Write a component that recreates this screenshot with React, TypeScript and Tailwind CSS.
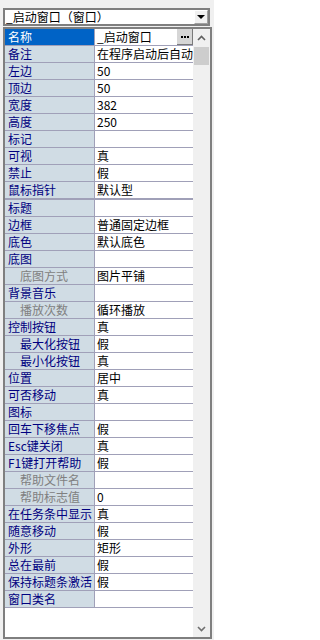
import React from "react"

type Row = {
  name: string
  value?: string
  indent?: boolean
  dim?: boolean
  thick?: boolean
  selected?: boolean
  button?: boolean
}

const rows: Row[] = [
  { name: "名称", value: "_启动窗口", selected: true, button: true },
  { name: "备注", value: "在程序启动后自动" },
  { name: "左边", value: "50" },
  { name: "顶边", value: "50" },
  { name: "宽度", value: "382" },
  { name: "高度", value: "250" },
  { name: "标记" },
  { name: "可视", value: "真" },
  { name: "禁止", value: "假" },
  { name: "鼠标指针", value: "默认型", thick: true },
  { name: "标题" },
  { name: "边框", value: "普通固定边框" },
  { name: "底色", value: "默认底色" },
  { name: "底图" },
  { name: "底图方式", value: "图片平铺", indent: true, dim: true },
  { name: "背景音乐" },
  { name: "播放次数", value: "循环播放", indent: true, dim: true },
  { name: "控制按钮", value: "真" },
  { name: "最大化按钮", value: "假", indent: true },
  { name: "最小化按钮", value: "真", indent: true },
  { name: "位置", value: "居中" },
  { name: "可否移动", value: "真" },
  { name: "图标" },
  { name: "回车下移焦点", value: "假" },
  { name: "Esc键关闭", value: "真" },
  { name: "F1键打开帮助", value: "假" },
  { name: "帮助文件名", indent: true, dim: true },
  { name: "帮助标志值", value: "0", indent: true, dim: true },
  { name: "在任务条中显示", value: "真" },
  { name: "随意移动", value: "假" },
  { name: "外形", value: "矩形" },
  { name: "总在最前", value: "假" },
  { name: "保持标题条激活", value: "假" },
  { name: "窗口类名" },
]

const PropRow = ({ row }: { row: Row }) => {
  const nameColor = row.selected ? "text-white" : row.dim ? "text-[#808080]" : "text-[#000080]"
  return (
    <div
      className={
        row.thick
          ? "flex h-[18px] border-b-2 border-[#a0a0b8]"
          : "flex h-[17px] border-b border-[#a0a0b8]"
      }
    >
      <div
        className={`flex w-[90px] shrink-0 items-center border-r border-[#a0a0b8] whitespace-nowrap ${
          row.indent ? "pl-[15px]" : "pl-[3px]"
        } ${row.selected ? "bg-[#0063c6]" : "bg-[#d0dce4]"} ${nameColor}`}
      >
        {row.name}
      </div>
      <div className="flex flex-1 min-w-0 items-center bg-white">
        <div className="flex-1 min-w-0 pl-[2px] whitespace-nowrap overflow-hidden text-black">
          {row.value ?? ""}
        </div>
        {row.button && (
          <div className="flex h-[16px] w-[16px] shrink-0 items-center justify-center border-r border-b border-[#7a7a7a] bg-[#d6d6d6]">
            <svg width="8" height="2" viewBox="0 0 8 2">
              <rect x="0" y="0" width="2" height="2" fill="#000" />
              <rect x="3" y="0" width="2" height="2" fill="#000" />
              <rect x="6" y="0" width="2" height="2" fill="#000" />
            </svg>
          </div>
        )}
      </div>
    </div>
  )
}

export default function App() {
  return (
    <div className="h-[640px] w-[214px] bg-[#f0f0f0] pl-[3px] pt-[8px] font-['Noto_Sans_CJK_SC',sans-serif] text-[12px] leading-[16px]">
      {/* combo box */}
      <div className="flex h-[18px] w-[207px] items-center border-2 border-[#7f7f7f] bg-white">
        <div className="flex-1 min-w-0 pl-[1px] leading-[14px] text-black whitespace-nowrap">
          _启动窗口（窗口）
        </div>
        <div className="flex h-[14px] w-[14px] shrink-0 items-center justify-center border border-t-white border-l-white border-r-[#a0a0a0] border-b-[#a0a0a0] bg-[#f0f0f0]">
          <svg width="8" height="4" viewBox="0 0 8 4">
            <polygon points="0,0 8,0 4,4" fill="#000" />
          </svg>
        </div>
      </div>

      {/* property grid */}
      <div className="mt-[1px] flex h-[612px] w-[209px] border-2 border-[#7f7f7f] bg-white">
        <div className="flex w-[188px] flex-col">
          {rows.map((row) => (
            <PropRow key={row.name} row={row} />
          ))}
        </div>
        <div className="flex w-[17px] flex-col bg-[#f0f0f0]">
          <div className="flex h-[18px] items-center justify-center">
            <svg width="9" height="6" viewBox="0 0 9 6">
              <polyline points="1,5 4.5,1.5 8,5" fill="none" stroke="#606060" strokeWidth="1.6" />
            </svg>
          </div>
          <div className="mx-[1px] h-[18px] bg-[#cdcdcd]" />
          <div className="flex-1" />
          <div className="flex h-[17px] items-center justify-center">
            <svg width="9" height="6" viewBox="0 0 9 6">
              <polyline points="1,1 4.5,4.5 8,1" fill="none" stroke="#707070" strokeWidth="1.6" />
            </svg>
          </div>
        </div>
      </div>
    </div>
  )
}
